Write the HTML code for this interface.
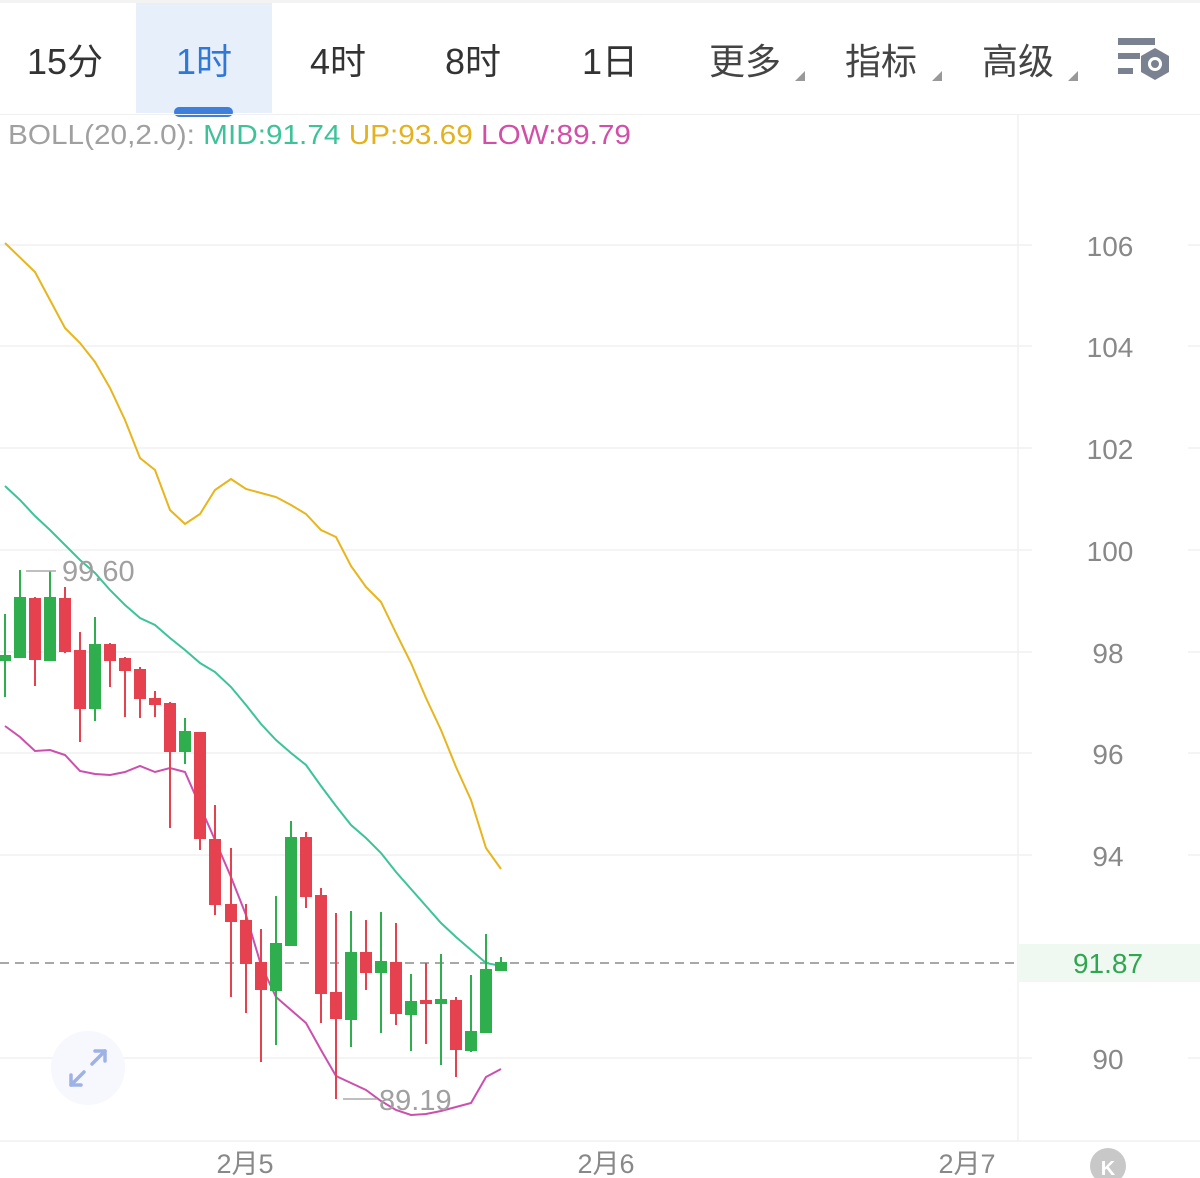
<!DOCTYPE html>
<html><head><meta charset="utf-8"><style>
html,body{margin:0;padding:0;background:#fff;}
svg{display:block;}
text{font-family:"Liberation Sans","Noto Sans CJK SC",sans-serif;}
</style></head><body>
<svg width="1200" height="1178" viewBox="0 0 1200 1178" xmlns="http://www.w3.org/2000/svg">
<rect x="0" y="0" width="1200" height="1178" fill="#fff"/>
<rect x="0" y="0" width="1200" height="3" fill="#f3f3f3"/>
<rect x="136" y="3" width="136" height="110" fill="#e7effb"/>
<rect x="174" y="107" width="59" height="10" rx="5" fill="#3f7fdc"/>
<line x1="0" y1="114.5" x2="1200" y2="114.5" stroke="#f0f0f0" stroke-width="1"/>
<g font-size="36" fill="#333">
<text x="27" y="74">15分</text>
<text x="176" y="74" fill="#2f78d8">1时</text>
<text x="310" y="74">4时</text>
<text x="445" y="74">8时</text>
<text x="582" y="74">1日</text>
<text x="709" y="74" fill="#444">更多</text>
<text x="845" y="74" fill="#444">指标</text>
<text x="982" y="74" fill="#444">高级</text>
</g>
<g fill="#999">
<polygon points="795,81 805,71 805,81"/>
<polygon points="932,81 942,71 942,81"/>
<polygon points="1068,81 1078,71 1078,81"/>
</g>
<g fill="#7a8292">
<rect x="1118" y="38" width="37" height="7"/>
<rect x="1118" y="53" width="22" height="6"/>
<rect x="1118" y="68" width="15" height="6"/>
<polygon points="1155,48 1169,56 1169,72 1155,80 1141,72 1141,56"/>
</g>
<circle cx="1155" cy="64" r="7" fill="#fff"/>
<circle cx="1155" cy="64" r="4" fill="#7a8292"/>
<text x="8" y="144" font-size="28" fill="#a0a0a0" textLength="623" lengthAdjust="spacingAndGlyphs">BOLL(20,2.0):<tspan fill="#3cc39a"> MID:91.74</tspan><tspan fill="#e4b21f"> UP:93.69</tspan><tspan fill="#d24fa8"> LOW:89.79</tspan></text>
<g stroke="#f0f0f0" stroke-width="1.5">
<line x1="0" y1="245" x2="1032" y2="245"/><line x1="1188" y1="245" x2="1200" y2="245"/>
<line x1="0" y1="346" x2="1032" y2="346"/><line x1="1188" y1="346" x2="1200" y2="346"/>
<line x1="0" y1="448" x2="1032" y2="448"/><line x1="1188" y1="448" x2="1200" y2="448"/>
<line x1="0" y1="550" x2="1032" y2="550"/><line x1="1188" y1="550" x2="1200" y2="550"/>
<line x1="0" y1="652" x2="1032" y2="652"/><line x1="1188" y1="652" x2="1200" y2="652"/>
<line x1="0" y1="753" x2="1032" y2="753"/><line x1="1188" y1="753" x2="1200" y2="753"/>
<line x1="0" y1="855" x2="1032" y2="855"/><line x1="1188" y1="855" x2="1200" y2="855"/>
<line x1="0" y1="1058" x2="1032" y2="1058"/><line x1="1188" y1="1058" x2="1200" y2="1058"/>
<line x1="1018" y1="115" x2="1018" y2="1141"/>
<line x1="0" y1="1141" x2="1200" y2="1141"/>
</g>
<g font-size="28" fill="#888" text-anchor="middle">
<text x="1110" y="256">106</text>
<text x="1110" y="357">104</text>
<text x="1110" y="459">102</text>
<text x="1110" y="561">100</text>
<text x="1108" y="663">98</text>
<text x="1108" y="764">96</text>
<text x="1108" y="866">94</text>
<text x="1108" y="1069">90</text>
</g>
<rect x="1018" y="944" width="182" height="38" fill="#eff9f2"/>
<text x="1108" y="973" font-size="28" fill="#2fa64f" text-anchor="middle">91.87</text>
<line x1="0" y1="963" x2="1015" y2="963" stroke="#a8a8a8" stroke-width="2" stroke-dasharray="9,6"/>
<polyline fill="none" stroke="#e8b51c" stroke-width="2" points="5,243 35,272 65,328 80,343 95,362 110,388 125,420 140,458 155,470 170,510 185,524 200,514 215,490 231,479 246,489 261,493 276,497 291,505 306,514 321,530 336,537 351,566 366,587 381,602 396,633 411,663 426,698 441,730 456,767 471,800 486,848 501,869"/>
<polyline fill="none" stroke="#3cc39a" stroke-width="2" points="5,486 20,500 35,516 50,530 65,545 80,560 95,573 110,590 125,605 140,618 155,625 170,638 185,650 200,663 215,672 231,687 246,705 261,724 276,740 291,753 306,765 321,786 336,806 351,825 366,838 381,853 396,872 411,889 426,906 441,923 456,937 471,950 486,963 501,966"/>
<polyline fill="none" stroke="#cc4fae" stroke-width="2" points="5,726 20,737 35,751 50,750 65,755 80,771 95,774 110,775 125,772 140,766 155,772 170,768 185,772 200,806 215,840 231,877 246,915 261,965 276,997 291,1010 306,1023 321,1050 336,1076 351,1083 366,1090 381,1101 396,1110 411,1115 426,1114 441,1111 456,1107 471,1103 486,1077 501,1069"/>
<g stroke-width="2">
<g fill="#2fae4e" stroke="#2fae4e">
<line x1="5" y1="614" x2="5" y2="697"/><rect x="0" y="656" width="10" height="4"/>
<line x1="20" y1="570" x2="20" y2="657"/><rect x="15" y="598" width="10" height="59"/>
<line x1="50" y1="571" x2="50" y2="660"/><rect x="45" y="598" width="10" height="62"/>
<line x1="95" y1="617" x2="95" y2="721"/><rect x="90" y="645" width="10" height="63"/>
<line x1="185" y1="718" x2="185" y2="764"/><rect x="180" y="732" width="10" height="19"/>
<line x1="276" y1="896" x2="276" y2="1045"/><rect x="271" y="944" width="10" height="46"/>
<line x1="291" y1="821" x2="291" y2="945"/><rect x="286" y="838" width="10" height="107"/>
<line x1="351" y1="911" x2="351" y2="1047"/><rect x="346" y="953" width="10" height="66"/>
<line x1="381" y1="912" x2="381" y2="1033"/><rect x="376" y="962" width="10" height="10"/>
<line x1="411" y1="974" x2="411" y2="1051"/><rect x="406" y="1002" width="10" height="12"/>
<line x1="441" y1="954" x2="441" y2="1065"/><rect x="436" y="1000" width="10" height="3"/>
<line x1="471" y1="975" x2="471" y2="1052"/><rect x="466" y="1032" width="10" height="18"/>
<line x1="486" y1="934" x2="486" y2="1032"/><rect x="481" y="970" width="10" height="62"/>
<line x1="501" y1="957" x2="501" y2="971"/><rect x="496" y="963" width="10" height="7"/>
</g>
<g fill="#e5414f" stroke="#e5414f">
<line x1="35" y1="597" x2="35" y2="686"/><rect x="30" y="599" width="10" height="60"/>
<line x1="65" y1="587" x2="65" y2="653"/><rect x="60" y="599" width="10" height="52"/>
<line x1="80" y1="632" x2="80" y2="742"/><rect x="75" y="651" width="10" height="57"/>
<line x1="110" y1="643" x2="110" y2="687"/><rect x="105" y="645" width="10" height="15"/>
<line x1="125" y1="657" x2="125" y2="717"/><rect x="120" y="659" width="10" height="11"/>
<line x1="140" y1="667" x2="140" y2="718"/><rect x="135" y="670" width="10" height="28"/>
<line x1="155" y1="691" x2="155" y2="717"/><rect x="150" y="699" width="10" height="5"/>
<line x1="170" y1="702" x2="170" y2="828"/><rect x="165" y="704" width="10" height="47"/>
<line x1="200" y1="733" x2="200" y2="850"/><rect x="195" y="733" width="10" height="105"/>
<line x1="215" y1="805" x2="215" y2="915"/><rect x="210" y="840" width="10" height="64"/>
<line x1="231" y1="848" x2="231" y2="997"/><rect x="226" y="905" width="10" height="16"/>
<line x1="246" y1="904" x2="246" y2="1013"/><rect x="241" y="921" width="10" height="42"/>
<line x1="261" y1="929" x2="261" y2="1062"/><rect x="256" y="963" width="10" height="26"/>
<line x1="306" y1="832" x2="306" y2="908"/><rect x="301" y="838" width="10" height="58"/>
<line x1="321" y1="888" x2="321" y2="1023"/><rect x="316" y="896" width="10" height="97"/>
<line x1="336" y1="913" x2="336" y2="1099"/><rect x="331" y="993" width="10" height="25"/>
<line x1="366" y1="920" x2="366" y2="990"/><rect x="361" y="953" width="10" height="19"/>
<line x1="396" y1="923" x2="396" y2="1025"/><rect x="391" y="963" width="10" height="50"/>
<line x1="426" y1="963" x2="426" y2="1044"/><rect x="421" y="1001" width="10" height="2"/>
<line x1="456" y1="997" x2="456" y2="1077"/><rect x="451" y="1001" width="10" height="48"/>
</g>
</g>
<line x1="26" y1="571" x2="56" y2="571" stroke="#aaa" stroke-width="1.5"/>
<text x="62" y="581" font-size="29" fill="#a0a0a0">99.60</text>
<line x1="343" y1="1099" x2="377" y2="1099" stroke="#aaa" stroke-width="1.5"/>
<text x="379" y="1110" font-size="29" fill="#a0a0a0">89.19</text>
<circle cx="88" cy="1068" r="37" fill="#f6f8fd"/>
<g stroke="#9fb2e6" stroke-width="3.5" fill="none" stroke-linecap="round" stroke-linejoin="round">
<line x1="92" y1="1064" x2="105" y2="1051"/><polyline points="95,1051 105,1051 105,1061"/>
<line x1="84" y1="1072" x2="71" y2="1085"/><polyline points="71,1075 71,1085 81,1085"/>
</g>
<g font-size="27" fill="#888" text-anchor="middle">
<text x="245" y="1173">2月5</text>
<text x="606" y="1173">2月6</text>
<text x="967" y="1173">2月7</text>
</g>
<circle cx="1108" cy="1166" r="18" fill="#c8c8c8"/>
<text x="1108" y="1175" font-size="20" font-weight="bold" fill="#fff" text-anchor="middle">K</text>
</svg>
</body></html>
